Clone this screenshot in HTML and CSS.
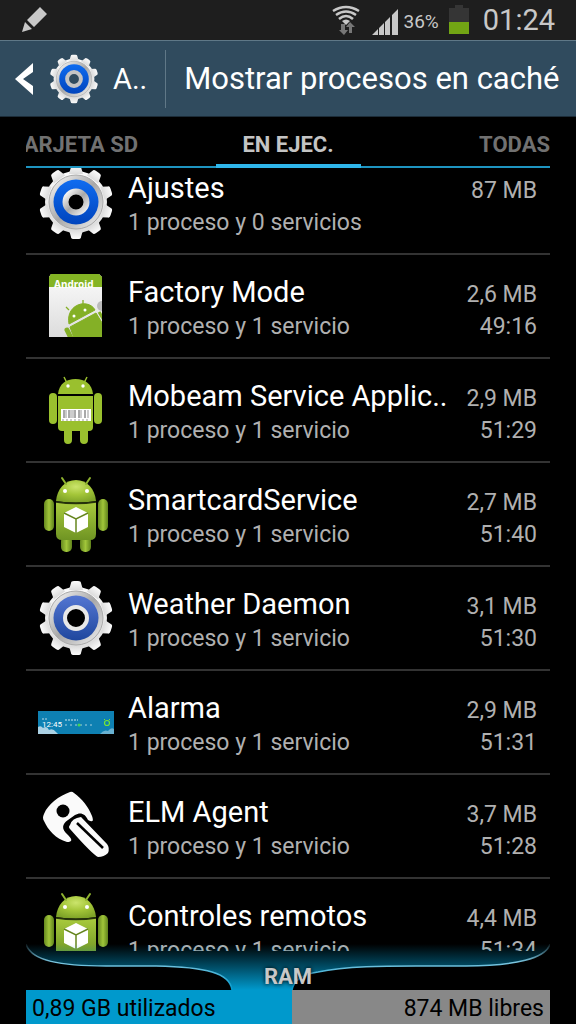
FILE: index.html
```html
<!DOCTYPE html>
<html lang="es">
<head>
    <meta charset="UTF-8">
    <meta name="viewport" content="width=device-width, initial-scale=1.0">
    <title>Administrador de aplicaciones</title>
    <link rel="stylesheet" href="styles.css">
</head>
<body>
    <!-- Iconos compartidos -->
    <svg class="defs" width="0" height="0" aria-hidden="true">
        <defs>
            <linearGradient id="metal" x1="0" y1="0" x2="1" y2="1">
                <stop offset="0" stop-color="#fff"/>
                <stop offset=".5" stop-color="#a8a8a8"/>
                <stop offset="1" stop-color="#f4f4f4"/>
            </linearGradient>
            <linearGradient id="plate" x1="0" y1="0" x2="0" y2="1">
                <stop offset="0" stop-color="#fbfbfb"/>
                <stop offset="1" stop-color="#dcdcdc"/>
            </linearGradient>
            <linearGradient id="blue" x1="0" y1="0" x2="0" y2="1">
                <stop offset="0" stop-color="#0f6cf0"/>
                <stop offset="1" stop-color="#0044bd"/>
            </linearGradient>
            <linearGradient id="blueSoft" x1="0" y1="0" x2="0" y2="1">
                <stop offset="0" stop-color="#5476d2"/>
                <stop offset="1" stop-color="#1f479e"/>
            </linearGradient>
            <linearGradient id="green" x1="0" y1="0" x2="0" y2="1">
                <stop offset="0" stop-color="#a9cb3d"/>
                <stop offset="1" stop-color="#6f9423"/>
            </linearGradient>
            <linearGradient id="limb" x1="0" y1="0" x2="1" y2="0">
                <stop offset="0" stop-color="#66891f"/>
                <stop offset=".5" stop-color="#a1c63a"/>
                <stop offset="1" stop-color="#5f821b"/>
            </linearGradient>
            <radialGradient id="head" cx=".5" cy=".3" r=".7">
                <stop offset="0" stop-color="#cbe46c"/>
                <stop offset=".5" stop-color="#a4c639"/>
                <stop offset="1" stop-color="#7fa428"/>
            </radialGradient>
            <clipPath id="card-clip"><path d="M11 8H64V69H11Z"/></clipPath>
        </defs>
        <symbol id="gear-body" viewBox="0 0 76 76">
            <g fill="url(#plate)">
                <circle cx="38" cy="38" r="31"/>
                <path id="tooth" d="M31 10 33 3Q33 1 36 1H40Q43 1 43 3L45 10Z"/>
                <use href="#tooth" transform="rotate(36 38 38)"/>
                <use href="#tooth" transform="rotate(72 38 38)"/>
                <use href="#tooth" transform="rotate(108 38 38)"/>
                <use href="#tooth" transform="rotate(144 38 38)"/>
                <use href="#tooth" transform="rotate(180 38 38)"/>
                <use href="#tooth" transform="rotate(216 38 38)"/>
                <use href="#tooth" transform="rotate(252 38 38)"/>
                <use href="#tooth" transform="rotate(288 38 38)"/>
                <use href="#tooth" transform="rotate(324 38 38)"/>
            </g>
            <circle cx="38" cy="38" r="27" fill="url(#metal)" stroke="#aaa"/>
        </symbol>
        <symbol id="gear" viewBox="0 0 76 76">
            <use href="#gear-body"/>
            <circle cx="38" cy="38" r="22.5" fill="url(#blue)"/>
            <circle cx="38" cy="38" r="10.5" fill="#000" stroke="url(#metal)" stroke-width="6"/>
        </symbol>
        <symbol id="gear-small" viewBox="0 0 76 76">
            <use href="#gear-body"/>
            <circle cx="38" cy="38" r="22.5" fill="url(#blue)"/>
            <circle cx="38" cy="38" r="10.5" fill="#304b5e" stroke="#c4c4c4" stroke-width="6"/>
        </symbol>
        <symbol id="gear-soft" viewBox="0 0 76 76">
            <use href="#gear-body"/>
            <circle cx="38" cy="38" r="22.5" fill="url(#blueSoft)"/>
            <circle cx="38" cy="38" r="11" fill="#000" stroke="#e8e8e8" stroke-width="4"/>
        </symbol>
        <symbol id="app-card" viewBox="0 0 76 76">
            <path d="M11 9 13 6H61L64 9V69H11Z" fill="url(#plate)"/>
            <path d="M11 9 13 6H61L64 9V19H11Z" fill="#84b424"/>
            <text x="16" y="20" class="card-text">Android</text>
            <g clip-path="url(#card-clip)">
                <circle cx="64" cy="38" r="5" fill="#bbb"/>
                <g fill="#84b026" stroke="#84b026">
                    <path d="M31 56C29 46 34 38 43 36 50 35 55 38 57 42Z"/>
                    <path d="M31 42 28 39M45 38V32" stroke-width="1.3"/>
                    <path d="M32 59 58 45 66 58V73H37Z"/>
                    <path d="M29 62 34 72" stroke-width="5" stroke-linecap="round"/>
                    <path d="M61 44 66 52" stroke-width="3"/>
                </g>
            </g>
            <circle cx="36" cy="48" r="1.5" fill="#fff"/>
            <circle cx="47" cy="42" r="1.5" fill="#fff"/>
        </symbol>
        <symbol id="app-barcode" viewBox="0 0 76 76">
            <g fill="#9ac02e">
                <path d="M20 22C21 12 28 7 37.500 7S54 12 55 22Z"/>
                <path d="M20 24H55V55Q55 59 51 59H24Q20 59 20 55Z"/>
                <rect x="11" y="21" width="8" height="31" rx="4"/>
                <rect x="56" y="21" width="8" height="31" rx="4"/>
                <path d="M26 57V68A4 4 0 0 0 34 68V57ZM42 57V68A4 4 0 0 0 50 68V57Z"/>
            </g>
            <path d="M26 5 29 11M49 5 46 11" stroke="#9ac02e" stroke-width="1.5"/>
            <circle cx="30" cy="14" r="1.700" fill="#fff"/>
            <circle cx="45" cy="14" r="1.700" fill="#fff"/>
            <path d="M23 37H53V49H23Z" fill="#fff"/>
            <path d="M26 38V46M31 38V46M37 38V46M41 38V46M47 38V46" stroke="#555"/>
            <path d="M28 38V46M33 38V46M35 38V46M43 38V46M50 38V46" stroke="#999"/>
            <path d="M24 48H52" stroke="#999" stroke-dasharray="2 2"/>
        </symbol>
        <symbol id="app-cube" viewBox="0 0 76 76">
            <rect x="23" y="60" width="11" height="16" rx="5" fill="url(#limb)"/>
            <rect x="42" y="60" width="11" height="16" rx="5" fill="url(#limb)"/>
            <path d="M18 25C19 13 27 4 38 4S57 13 58 25Q38 28 18 25Z" fill="url(#head)"/>
            <path d="M18 26Q38 29 58 26V58Q58 64 52 64H24Q18 64 18 58Z" fill="url(#green)"/>
            <path d="M18 26Q38 29 58 26" fill="none" stroke="#26330c" stroke-width="1.5"/>
            <rect x="6" y="23" width="10" height="32" rx="5" fill="url(#limb)"/>
            <rect x="60" y="23" width="10" height="32" rx="5" fill="url(#limb)"/>
            <path d="M24 2 28 8M52 2 48 8" stroke="#8eb22f" stroke-width="2" stroke-linecap="round"/>
            <circle cx="27" cy="15" r="2" fill="#fff"/>
            <circle cx="49" cy="15" r="2" fill="#fff"/>
            <path d="M38 31 50 37V51L38 57 26 51V37Z" fill="#fff"/>
            <path d="M26 37 38 43 50 37M38 43V57" fill="none" stroke="#66861f" stroke-width="1.500"/>
        </symbol>
        <symbol id="app-clock" viewBox="0 0 76 76">
            <path d="M0 27H76V50H0Z" fill="#0e80b2"/>
            <path d="M0 43Q3 41 5 44 9 41 11 46 15 44 18 48L20 50H0Z" fill="#abd1e4"/>
            <path d="M62 50Q66 45 70 47 73 43 76 45V50Z" fill="#68b1d1"/>
            <text x="4" y="43" class="clock-time">12:45</text>
            <path d="M4 35H9" stroke="#b5dae9" stroke-dasharray="2 1"/>
            <path d="M27 36H40" stroke="#c8e6f0" stroke-dasharray="2 1"/>
            <path d="M27 41H55" stroke="#a5cfdf" stroke-dasharray="2 3"/>
            <circle cx="41" cy="41" r="1.500" fill="#44d455"/>
            <circle cx="69" cy="39" r="2.500" fill="none" stroke="#75e536" stroke-width="1.200"/>
            <path d="M66 36 67 35M71 35 72 36" stroke="#75e536"/>
        </symbol>
        <symbol id="app-key" viewBox="0 0 76 76">
            <path d="M32 4Q34 3 36 5C44 11 50 18 54 28Q57 36 50 32C47 25 42 24 37 27L30 32C24 36 23 41 30 47Q37 54 29 54C18 51 10 42 6 33Q4 30 6 26C10 16 21 8 32 4Z" fill="#fafafa"/>
            <circle cx="25" cy="23" r="6.500" fill="#000"/>
            <path d="M32 37Q34 30 43 29L69 56Q72 60 70 65 66 69 60 69 54 66 32 41Q30 39 32 37Z" fill="#fafafa"/>
            <path d="M39 35 65 60" stroke="#000" stroke-width="2.500"/>
        </symbol>
    </svg>

    <div class="screen">
        <div class="status-bar">
            <svg class="pen" width="28" height="28" viewBox="0 0 28 28" fill="#c8c8c8">
                <path d="M19 1 26 8 13 21 6 14ZM4 16 11 23 1 26Z"/>
            </svg>
            <div class="status-icons">
                <svg width="28" height="30" viewBox="0 0 28 30">
                    <g fill="none" stroke="#c8c8c8" stroke-width="2.500">
                        <path d="M1 6Q14-2 27 6"/>
                        <path d="M4 10Q14 3 24 10"/>
                        <path d="M7 14Q14 8 21 14"/>
                    </g>
                    <path d="M10 16Q14 13 18 16L14 20Z" fill="#c8c8c8"/>
                    <path d="M9 19H13V25H16L12 30 7 25H9ZM17 28V22H14L18 17 23 22H20V28Z" fill="#777"/>
                </svg>
                <svg class="signal" width="26" height="26" viewBox="0 0 26 26" fill="#c8c8c8">
                    <path d="M0 26 6 20V26ZM7 19 12 14V26H7ZM13 13 18 8V26H13ZM20 6 26 0V26H20Z"/>
                </svg>
                <span class="percent">36%</span>
                <svg width="20" height="30" viewBox="0 0 20 30">
                    <path d="M0 3H6V0H14V3H20V17H0Z" fill="#353535"/>
                    <path d="M0 17H20V29H0Z" fill="#72a514"/>
                </svg>
                <time class="clock">01:24</time>
            </div>
        </div>

        <header class="action-bar">
            <button class="back" aria-label="Volver">
                <svg width="18" height="34" viewBox="0 0 18 34">
                    <path d="M18 1V10L8 17 18 24V33L0 17Z" fill="#fff"/>
                </svg>
                <svg width="50" height="50"><use href="#gear-small"/></svg>
                <span class="app-title">A..</span>
            </button>
            <button class="cached">Mostrar procesos en caché</button>
        </header>

        <nav class="tabs">
            <button class="tab tab-left"><span>TARJETA SD</span></button>
            <button class="tab active">EN EJEC.</button>
            <button class="tab tab-right">TODAS</button>
        </nav>

        <main class="list-window">
            <ul class="processes">
                <li>
                    <a href="#" class="process">
                        <svg class="icon"><use href="#gear"/></svg>
                        <span class="info"><span class="name">Ajustes</span><span class="detail">1 proceso y 0 servicios</span></span>
                        <span class="usage"><span>87 MB</span></span>
                    </a>
                </li>
                <li>
                    <a href="#" class="process">
                        <svg class="icon"><use href="#app-card"/></svg>
                        <span class="info"><span class="name">Factory Mode</span><span class="detail">1 proceso y 1 servicio</span></span>
                        <span class="usage"><span>2,6 MB</span><span>49:16</span></span>
                    </a>
                </li>
                <li>
                    <a href="#" class="process">
                        <svg class="icon"><use href="#app-barcode"/></svg>
                        <span class="info"><span class="name">Mobeam Service Applic..</span><span class="detail">1 proceso y 1 servicio</span></span>
                        <span class="usage"><span>2,9 MB</span><span>51:29</span></span>
                    </a>
                </li>
                <li>
                    <a href="#" class="process">
                        <svg class="icon"><use href="#app-cube"/></svg>
                        <span class="info"><span class="name">SmartcardService</span><span class="detail">1 proceso y 1 servicio</span></span>
                        <span class="usage"><span>2,7 MB</span><span>51:40</span></span>
                    </a>
                </li>
                <li>
                    <a href="#" class="process">
                        <svg class="icon"><use href="#gear-soft"/></svg>
                        <span class="info"><span class="name">Weather Daemon</span><span class="detail">1 proceso y 1 servicio</span></span>
                        <span class="usage"><span>3,1 MB</span><span>51:30</span></span>
                    </a>
                </li>
                <li>
                    <a href="#" class="process">
                        <svg class="icon"><use href="#app-clock"/></svg>
                        <span class="info"><span class="name">Alarma</span><span class="detail">1 proceso y 1 servicio</span></span>
                        <span class="usage"><span>2,9 MB</span><span>51:31</span></span>
                    </a>
                </li>
                <li>
                    <a href="#" class="process">
                        <svg class="icon"><use href="#app-key"/></svg>
                        <span class="info"><span class="name">ELM Agent</span><span class="detail">1 proceso y 1 servicio</span></span>
                        <span class="usage"><span>3,7 MB</span><span>51:28</span></span>
                    </a>
                </li>
                <li>
                    <a href="#" class="process">
                        <svg class="icon"><use href="#app-cube"/></svg>
                        <span class="info"><span class="name">Controles remotos</span><span class="detail">1 proceso y 1 servicio</span></span>
                        <span class="usage"><span>4,4 MB</span><span>51:34</span></span>
                    </a>
                </li>
            </ul>
        </main>

        <footer class="ram">
            <div class="ram-label">
                <svg class="ram-shape" viewBox="0 0 524 46" preserveAspectRatio="none">
                    <defs>
                        <linearGradient id="glow" x1="0" y1="0" x2="0" y2="1">
                            <stop offset="0" stop-color="#0099cc" stop-opacity="0"/>
                            <stop offset=".5" stop-color="#0099cc" stop-opacity=".5"/>
                            <stop offset="1" stop-color="#0099cc"/>
                        </linearGradient>
                        <linearGradient id="edge" x1="0" y1="0" x2="0" y2="1">
                            <stop offset="0" stop-color="#7cc6e0" stop-opacity=".1"/>
                            <stop offset=".4" stop-color="#7cc6e0"/>
                            <stop offset="1" stop-color="#0099cc"/>
                        </linearGradient>
                    </defs>
                    <path d="M0 0C5 17 35 22 80 22H130C180 23 204 29 206 46H266C268 36 278 30 292 28 320 22 360 22 390 22H440C490 22 520 14 524 0Z" fill="url(#glow)"/>
                    <path d="M0 0C5 17 35 22 80 22H130C180 23 204 29 206 46M266 46C268 36 278 30 292 28 320 22 360 22 390 22H440C490 22 520 14 524 0" fill="none" stroke="url(#edge)" stroke-width="1.500"/>
                </svg>
                <span>RAM</span>
            </div>
            <div class="ram-bar">
                <div class="used" style="width: 50.8%">0,89 GB utilizados</div>
                <div class="free">874 MB libres</div>
            </div>
        </footer>
    </div>
</body>
</html>
```
FILE: styles.css
```css
* {
    box-sizing: border-box;
}
body {
    margin: 0;
    background: #000;
    color: #fff;
    font-family: Roboto, "Liberation Sans", sans-serif;
}
button {
    padding: 0;
    border: none;
    background: none;
    color: inherit;
    font: inherit;
    cursor: pointer;
}
svg {
    display: block;
    flex-shrink: 0;
}
.defs {
    position: absolute;
}
.screen {
    display: flex;
    flex-direction: column;
    height: 100vh;
    overflow: hidden;
}

/* Barra de estado */
.status-bar {
    display: flex;
    align-items: center;
    justify-content: space-between;
    height: 40px;
    flex-shrink: 0;
    padding: 0 21px;
    background: #1e1e1e;
    color: #c8c8c8;
}
.status-icons {
    display: flex;
    align-items: center;
    gap: 10px;
}
.signal {
    margin: 4px 0 0 2px;
}
.percent {
    margin: 2px 0 0 -4px;
    font-size: 19px;
}
.clock {
    margin-left: 4px;
    font-size: 29px;
}

/* Cabecera */
.action-bar {
    display: flex;
    align-items: center;
    height: 77px;
    flex-shrink: 0;
    padding: 0 15px;
    background: #304b5e;
    border-top: 1px solid #5f7887;
    border-bottom: 1px solid #1c2c38;
    font-size: 31px;
    text-shadow: 0 2px 2px rgba(0,0,0,0.5);
}
.back {
    display: flex;
    align-items: center;
    height: 58px;
    padding-right: 18px;
    border-right: 1px solid #607887;
}
.back svg + svg {
    margin: 0 14px 0 16px;
}
.app-title {
    font-size: 29px;
}
.cached {
    flex: 1;
    padding-left: 18px;
    text-align: left;
    white-space: nowrap;
}

/* Pestañas */
.tabs {
    display: grid;
    grid-template-columns: 1fr 145px 1fr;
    height: 51px;
    flex-shrink: 0;
    margin: 0 26px;
    border-bottom: 2px solid #1e94c0;
}
.tab {
    display: flex;
    align-items: center;
    height: 51px;
    padding-top: 4px;
    color: #717171;
    font-size: 22px;
    font-weight: 700;
}
.tab-left {
    justify-content: flex-end;
    width: 112px;
    overflow: hidden;
    white-space: nowrap;
}
.tab-right {
    justify-content: flex-end;
}
.active {
    justify-content: center;
    padding-top: 8px;
    border-bottom: 4px solid #2fb6ea;
    color: #c4c4c4;
}

/* Lista de procesos */
.list-window {
    flex: 1;
    min-height: 0;
    margin: 0 26px;
    overflow: hidden;
}
.processes {
    margin: -17px 0 0;
    padding: 0;
    list-style: none;
}
.process {
    display: flex;
    height: 104px;
    padding: 0 13px 0 12px;
    border-bottom: 2px solid #333;
    color: #fff;
    text-decoration: none;
}
.icon {
    width: 76px;
    height: 76px;
    margin: 13px 14px 0 0;
}
.info {
    flex: 1;
    min-width: 0;
    padding-top: 19px;
    white-space: nowrap;
}
.name,
.detail,
.usage span {
    display: block;
}
.name {
    font-size: 29px;
    line-height: 36px;
}
.detail {
    color: #b0b0b0;
    font-size: 23px;
    line-height: 34px;
}
.usage {
    padding-top: 24px;
    color: #b0b0b0;
    font-size: 23px;
    line-height: 32px;
    text-align: right;
}
.card-text {
    fill: #fff;
    font: bold 10px "Noto Sans", sans-serif;
}
.clock-time {
    fill: #fff;
    font: 8px Roboto, sans-serif;
}

/* Memoria */
.ram {
    flex-shrink: 0;
    margin: 0 26px;
}
.ram-label {
    position: relative;
    height: 39px;
    padding-top: 12px;
    color: #c8c8c8;
    font-size: 22px;
    font-weight: 700;
    line-height: 28px;
    text-align: center;
    text-shadow: 0 0 4px #000;
}
.ram-label span {
    position: relative;
}
.ram-shape {
    position: absolute;
    left: 0;
    bottom: 0;
    width: 100%;
    height: 46px;
}
.ram-bar {
    display: flex;
    height: 34px;
    background: #888;
    color: #000;
    font-size: 23px;
    line-height: 38px;
    white-space: nowrap;
}
.used {
    padding-left: 6px;
    background: #0099cc;
}
.free {
    flex: 1;
    padding-right: 6px;
    text-align: right;
}
```
